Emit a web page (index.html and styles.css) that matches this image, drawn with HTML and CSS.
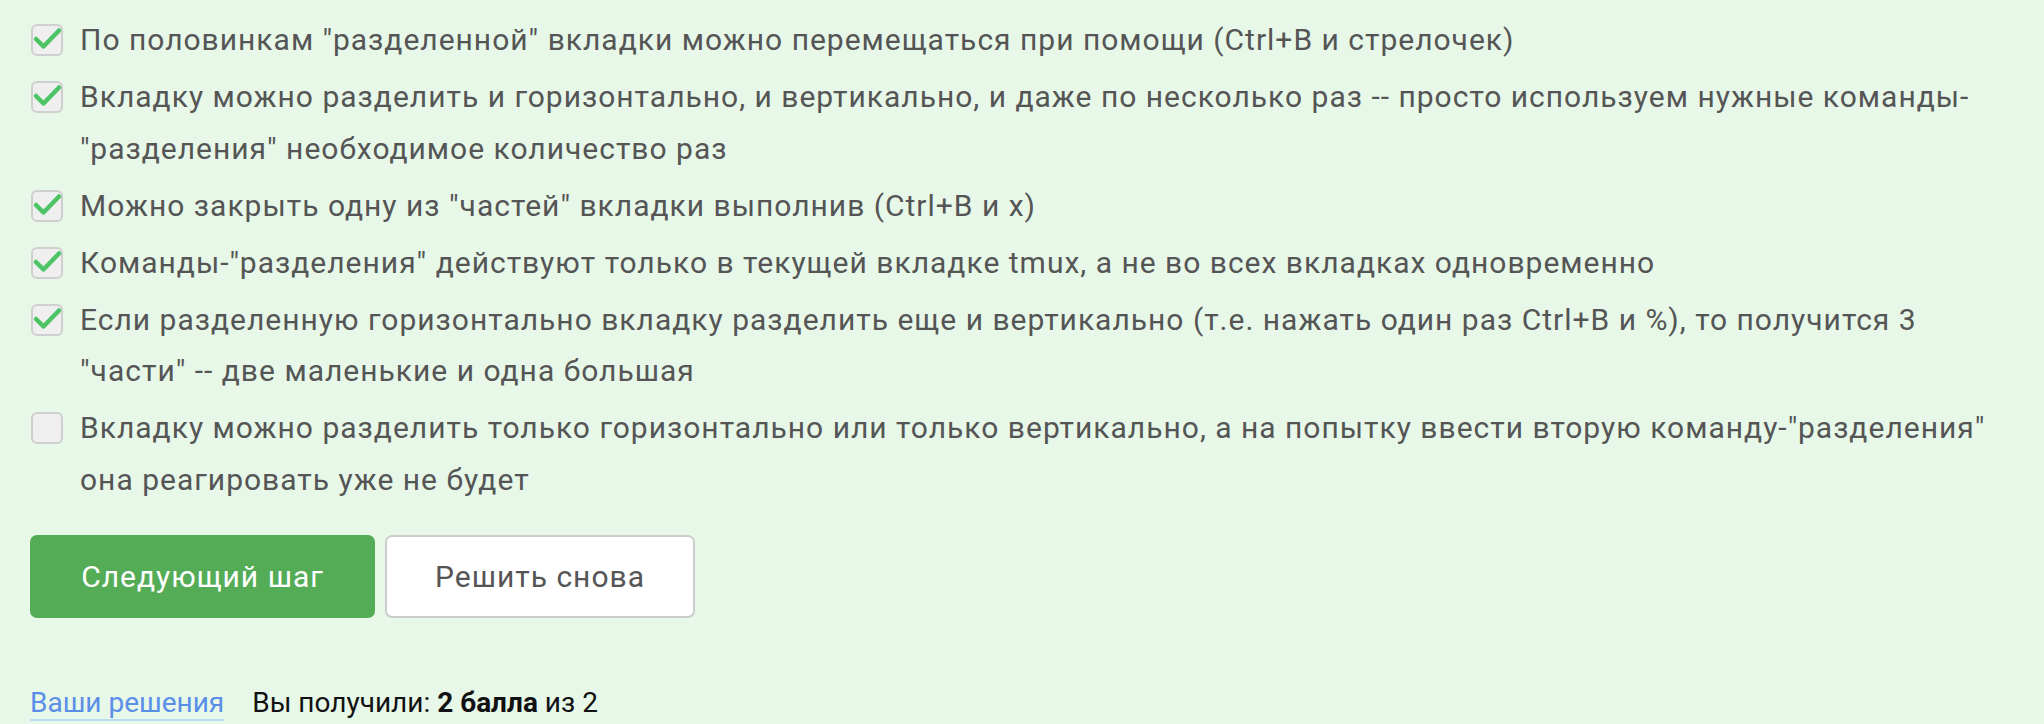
FILE: index.html
```html
<!DOCTYPE html>
<html lang="ru">
<head>
<meta charset="utf-8">
<link rel="stylesheet" href="styles.css">
</head>
<body>
<div class="page">
  <ul class="options">
    <li class="option">
      <span class="box checked"><svg viewBox="0 0 32 32"><polyline points="5,15 12.5,22.5 28,6.5"/></svg></span>
      <span class="label">По половинкам "разделенной" вкладки можно перемещаться при помощи (Ctrl+B и стрелочек)</span>
    </li>
    <li class="option">
      <span class="box checked"><svg viewBox="0 0 32 32"><polyline points="5,15 12.5,22.5 28,6.5"/></svg></span>
      <span class="label">Вкладку можно разделить и горизонтально, и вертикально, и даже по несколько раз -- просто используем нужные команды-"разделения" необходимое количество раз</span>
    </li>
    <li class="option">
      <span class="box checked"><svg viewBox="0 0 32 32"><polyline points="5,15 12.5,22.5 28,6.5"/></svg></span>
      <span class="label">Можно закрыть одну из "частей" вкладки выполнив (Ctrl+B и x)</span>
    </li>
    <li class="option">
      <span class="box checked"><svg viewBox="0 0 32 32"><polyline points="5,15 12.5,22.5 28,6.5"/></svg></span>
      <span class="label">Команды-"разделения" действуют только в текущей вкладке tmux, а не во всех вкладках одновременно</span>
    </li>
    <li class="option">
      <span class="box checked"><svg viewBox="0 0 32 32"><polyline points="5,15 12.5,22.5 28,6.5"/></svg></span>
      <span class="label">Если разделенную горизонтально вкладку разделить еще и вертикально (т.е. нажать один раз Ctrl+B и %), то получится 3<br>"части" -- две маленькие и одна большая</span>
    </li>
    <li class="option">
      <span class="box"></span>
      <span class="label">Вкладку можно разделить только горизонтально или только вертикально, а на попытку ввести вторую команду-"разделения" она реагировать уже не будет</span>
    </li>
  </ul>
  <div class="actions">
    <button class="btn btn-primary">Следующий шаг</button>
    <button class="btn btn-secondary">Решить снова</button>
  </div>
  <div class="result">
    <a class="link" href="#">Ваши решения</a>
    <span class="score">Вы получили: <b>2 балла</b> из 2</span>
  </div>
</div>
</body>
</html>
```

FILE: styles.css
```css
* { box-sizing: border-box; }
html, body {
  margin: 0;
  padding: 0;
  background: #e7f8e9;
}
body {
  font-family: Roboto, "Noto Sans", sans-serif;
  color: #555;
  width: 2044px;
  height: 724px;
  overflow: hidden;
}
.page {
  padding: 14px 28px 0 31px;
}
.options {
  list-style: none;
  margin: 0;
  padding: 0;
  display: flex;
  flex-direction: column;
  gap: 5.5px;
}
.option {
  display: flex;
  align-items: flex-start;
  font-size: 30px;
  letter-spacing: 1px;
  line-height: 51.5px;
}
.box {
  flex: 0 0 32px;
  width: 32px;
  height: 32px;
  margin-top: 10px;
  margin-right: 17px;
  border: 2px solid #cfcfcf;
  border-radius: 6px;
  background: #efefef;
  position: relative;
}
.box svg {
  position: absolute;
  left: -2px;
  top: -2px;
  width: 32px;
  height: 32px;
}
.box svg polyline {
  fill: none;
  stroke: #4dc566;
  stroke-width: 4.5;
  stroke-linecap: round;
  stroke-linejoin: round;
}
.label {
  flex: 1;
}
.actions {
  display: flex;
  gap: 10px;
  margin-top: 30px;
  margin-left: -1px;
}
.btn {
  font-family: Roboto, "Noto Sans", sans-serif;
  font-size: 30px;
  letter-spacing: 1px;
  height: 83px;
  border-radius: 7px;
  cursor: pointer;
}
.btn-primary {
  width: 345px;
  background: #54ac57;
  border: none;
  color: #fff;
}
.btn-secondary {
  width: 310px;
  background: #fff;
  border: 2px solid #cccccc;
  color: #555;
}
.result {
  display: flex;
  align-items: baseline;
  gap: 28px;
  margin-top: 68px;
  margin-left: -1px;
  font-size: 28px;
}
.link {
  color: #5a8ee8;
  text-decoration: none;
  border-bottom: 2px solid #b8dcf4;
  line-height: 1.15;
}
.score {
  color: #111;
}
.score b {
  font-weight: 700;
}
```
